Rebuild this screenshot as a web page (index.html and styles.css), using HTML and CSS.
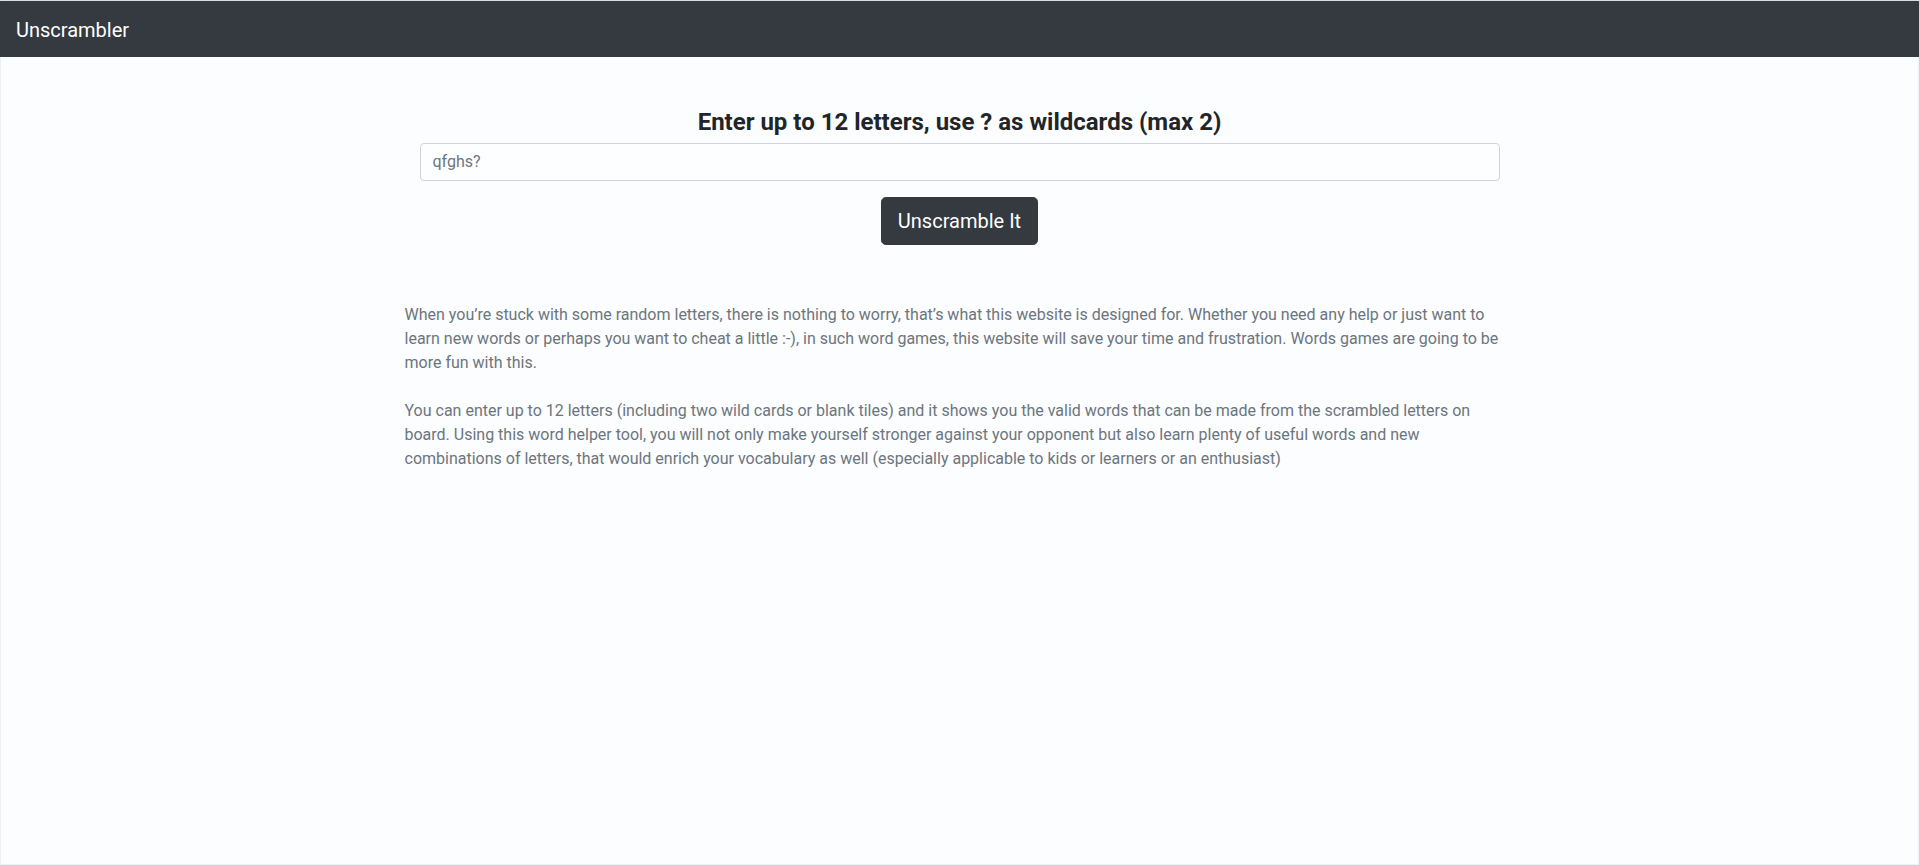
FILE: index.html
```html
<!DOCTYPE html>
<html lang="en">
<head>
<meta charset="utf-8">
<title>Unscrambler</title>
<link rel="stylesheet" href="styles.css">
</head>
<body>
<div class="frame">
  <nav class="navbar">
    <a class="brand" href="#">Unscrambler</a>
  </nav>
  <main class="container">
    <form class="search">
      <h4 class="title">Enter up to 12 letters, use ? as wildcards (max 2)</h4>
      <input class="field" type="text" value="qfghs?">
      <button class="btn" type="button">Unscramble It</button>
    </form>
    <section class="about">
      <p>When you’re stuck with some random letters, there is nothing to worry, that’s what this website is designed for. Whether you need any help or just want to learn new words or perhaps you want to cheat a little :-), in such word games, this website will save your time and frustration. Words games are going to be more fun with this.</p>
      <p>You can enter up to 12 letters (including two wild cards or blank tiles) and it shows you the valid words that can be made from the scrambled letters on board. Using this word helper tool, you will not only make yourself stronger against your opponent but also learn plenty of useful words and new combinations of letters, that would enrich your vocabulary as well (especially applicable to kids or learners or an enthusiast)</p>
    </section>
  </main>
</div>
</body>
</html>
```
FILE: styles.css
```css
* { box-sizing: border-box; }
html, body { margin: 0; padding: 0; }
body {
  font-family: Roboto, "Liberation Sans", sans-serif;
  font-size: 16px;
  line-height: 1.5;
  color: #212529;
  background: #fcfdfe;
}
.frame {
  min-height: 100vh;
  border-top: 1px solid #d9dbe1;
  border-left: 1px solid #edf0f7;
  border-right: 1px solid #edf0f7;
  border-bottom: 1px solid #edf0f7;
  display: flex;
  flex-direction: column;
}
.navbar {
  height: 56px;
  background: #343a40;
  padding: 8px 16px;
  display: flex;
  align-items: center;
  margin: 0 -1px;
}
.brand {
  color: #fff;
  text-decoration: none;
  font-size: 20px;
  line-height: 30px;
  padding: 6px 0 4px;
}
.container {
  width: 1110px;
  margin: 0 auto;
}
.search {
  padding: 51px 15px 0;
  display: flex;
  flex-direction: column;
  align-items: center;
}
.title {
  margin: 0 0 6px;
  font-size: 24px;
  font-weight: 700;
  line-height: 1.2;
  text-align: center;
  color: #212529;
}
.field {
  width: 100%;
  height: 38px;
  padding: 6px 12px;
  font-family: inherit;
  font-size: 16px;
  line-height: 1.5;
  color: #6c757d;
  background: #fdfeff;
  border: 1px solid #ced4da;
  border-radius: 4px;
  margin: 0 0 16px;
}
.btn {
  font-family: inherit;
  font-size: 20px;
  line-height: 1.5;
  padding: 8px 16px;
  color: #fff;
  background: #343a40;
  border: 1px solid #343a40;
  border-radius: 4.8px;
  cursor: pointer;
}
.about {
  padding-top: 58px;
  color: #6c757d;
}
.about p {
  margin: 0 0 24px;
}
```
